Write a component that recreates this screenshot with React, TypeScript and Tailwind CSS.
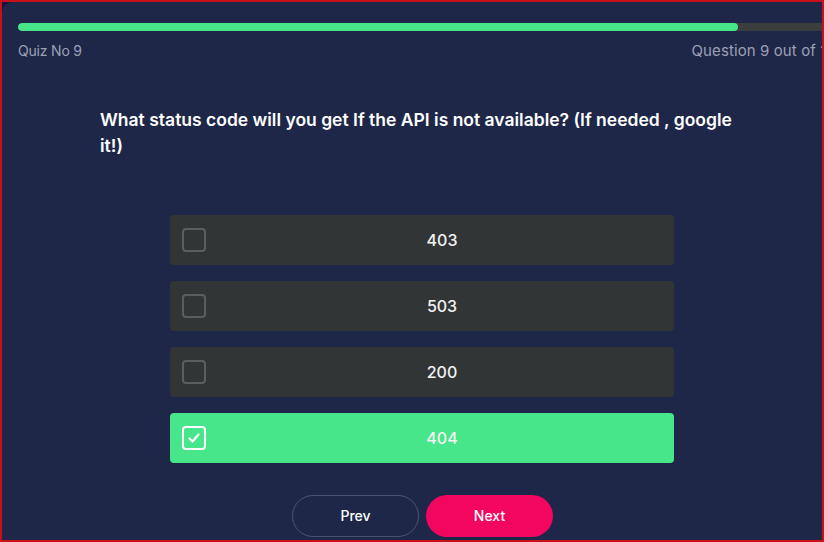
import React, { useState } from "react";

const options = ["403", "503", "200", "404"];

function CheckBox({ checked }: { checked: boolean }) {
  return (
    <div
      className={
        checked
          ? "w-6 h-6 rounded-[4px] border-2 border-white flex items-center justify-center"
          : "w-6 h-6 rounded-[4px] border-2 border-[#5b5e61]"
      }
    >
      {checked && (
        <svg width="14" height="14" viewBox="0 0 14 14" fill="none">
          <path
            d="M2.5 7.5L5.5 10.5L11.5 3.5"
            stroke="white"
            strokeWidth="2.2"
            strokeLinecap="round"
            strokeLinejoin="round"
          />
        </svg>
      )}
    </div>
  );
}

export default function App() {
  const [selected, setSelected] = useState(3);

  return (
    <div className="w-[824px] h-[542px] overflow-hidden border-2 border-[#c8101c] bg-[#141739] font-['Inter',sans-serif]">
      <div className="h-full rounded-tl-[10px] bg-[#1e2747] pl-4 pt-[21px] overflow-hidden">
        <div className="w-[818px]">
          <div className="h-2 rounded-full bg-[#3a3e3c] overflow-hidden">
            <div className="h-full w-[88%] rounded-full bg-[#47e68a]" />
          </div>
          <div className="flex justify-between items-baseline mt-[9px] text-[14px] text-[#9ba1b5] tracking-[-0.2px]">
            <span>Quiz No 9</span>
            <span className="text-[15px] tracking-[0.1px]">Question 9 out of 10</span>
          </div>
        </div>

        <h1 className="ml-[82px] mt-[44px] w-[660px] text-[17.5px] leading-[26px] font-semibold text-white">
          What status code will you get If the API is not available? (If needed , google
          <br />
          it!)
        </h1>

        <div className="ml-[152px] mt-[56px] w-[504px] flex flex-col gap-4">
          {options.map((opt, i) => (
            <button
              key={opt}
              onClick={() => setSelected(i)}
              className={
                selected === i
                  ? "h-[50px] rounded-[4px] bg-[#47e68a] flex items-center pl-3 pr-0"
                  : "h-[50px] rounded-[4px] bg-[#323536] flex items-center pl-3 pr-0"
              }
            >
              <CheckBox checked={selected === i} />
              <span className="flex-1 pl-1 text-center text-[16px] font-medium text-[#f2f2f2]">
                {opt}
              </span>
            </button>
          ))}
        </div>

        <div className="ml-[274px] mt-8 flex gap-[7px]">
          <button className="w-[127px] h-[42px] rounded-full border border-[#4a5372] text-[14px] font-medium text-white">
            Prev
          </button>
          <button className="w-[127px] h-[42px] rounded-full bg-[#f2065f] text-[14px] font-medium text-white">
            Next
          </button>
        </div>
      </div>
    </div>
  );
}
